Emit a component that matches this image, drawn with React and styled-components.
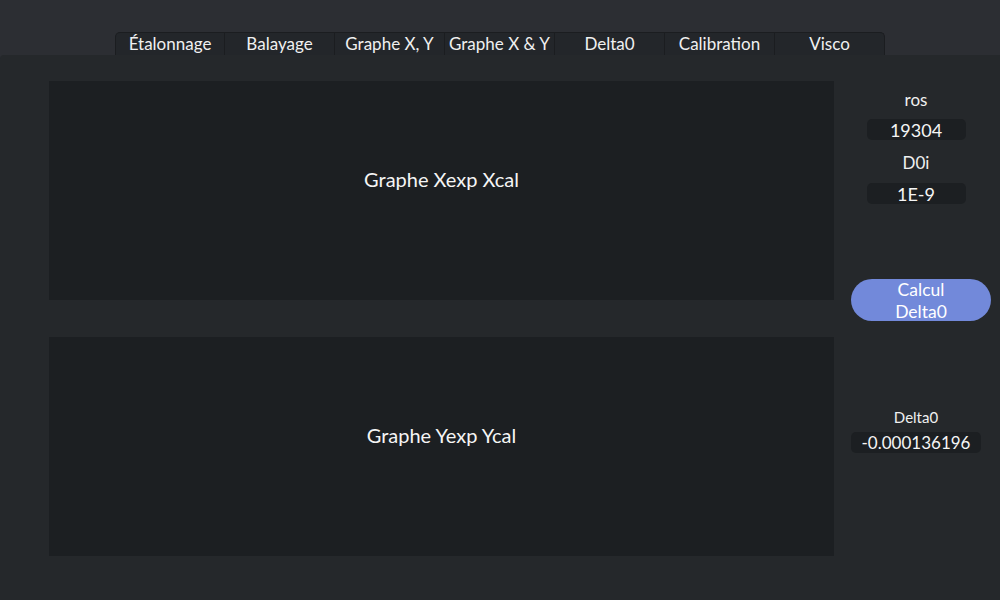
import React from 'react';
import styled, {createGlobalStyle} from 'styled-components';

const GlobalStyle = createGlobalStyle`
  html, body {
    margin: 0;
    padding: 0;
    background: #2c2e33;
    font-family: Lato, "Open Sans", sans-serif;
    color: #f2f2f2;
  }
`;

const Page = styled('div')`
  width: 1000px;
  height: 600px;
  display: flex;
  flex-direction: column;
  overflow: hidden;
`;

const TabBar = styled('div')`
  display: flex;
  padding-top: 32px;
  padding-left: 115px;
  height: 23px;
`;

const Tab = styled('div')`
  width: 110px;
  height: 23px;
  box-sizing: border-box;
  padding-bottom: 1px;
  background: #23262a;
  border: 1px solid #1b1d20;
  border-bottom: none;
  border-left: ${p => (p.first ? '1px solid #1b1d20' : 'none')};
  border-radius: ${p => (p.first ? '5px 0 0 0' : p.last ? '0 5px 0 0' : '0')};
  display: flex;
  align-items: center;
  justify-content: center;
  font-size: 17px;
  color: #f0f0f0;
  white-space: nowrap;
`;

const Panel = styled('div')`
  flex: 1;
  background: #25282b;
  border-radius: 4px 0 0 0;
  display: flex;
`;

const Graphs = styled('div')`
  display: flex;
  flex-direction: column;
  gap: 37px;
  padding: 26px 0 0 49px;
`;

const Graph = styled('div')`
  width: 785px;
  height: 219px;
  box-sizing: border-box;
  padding-bottom: 24px;
  background: #1c1f22;
  display: flex;
  align-items: center;
  justify-content: center;
  font-size: 20px;
  color: #f5f5f5;
`;

const Side = styled('div')`
  width: 130px;
  margin-left: 17px;
  padding-top: 35px;
  display: flex;
  flex-direction: column;
  align-items: center;
`;

const Label = styled('div')`
  font-size: ${p => (p.small ? '15px' : '17px')};
  line-height: ${p => (p.small ? '18px' : '20px')};
  margin-top: ${p => p.top || 0}px;
  color: #f0f0f0;
`;

const Field = styled('div')`
  width: ${p => p.w || 99}px;
  height: 21px;
  margin-top: ${p => p.top || 0}px;
  background: #1c1f22;
  border-radius: 5px;
  display: flex;
  align-items: center;
  justify-content: center;
  font-size: ${p => p.size || 18}px;
  color: #f5f5f5;
`;

const Button = styled('div')`
  align-self: flex-start;
  width: 140px;
  height: 42px;
  margin-top: 75px;
  background: #7289da;
  border-radius: 21px;
  box-sizing: border-box;
  text-align: center;
  font-size: 17.5px;
  line-height: 22px;
  color: #fff;
  overflow: hidden;
`;

const tabs = ['Étalonnage', 'Balayage', 'Graphe X, Y', 'Graphe X & Y', 'Delta0', 'Calibration', 'Visco'];

export default function App() {
  return (
    <Page>
      <GlobalStyle/>
      <TabBar>
        {tabs.map((t, i) => (
          <Tab key={t} first={i === 0} last={i === tabs.length - 1}>{t}</Tab>
        ))}
      </TabBar>
      <Panel>
        <Graphs>
          <Graph>Graphe Xexp Xcal</Graph>
          <Graph>Graphe Yexp Ycal</Graph>
        </Graphs>
        <Side>
          <Label>ros</Label>
          <Field top={9}>19304</Field>
          <Label top={13}>D0i</Label>
          <Field top={10}>1E-9</Field>
          <Button>Calcul<br/>Delta0</Button>
          <Label small top={87}>Delta0</Label>
          <Field w={130} top={6} size={17}>-0.000136196</Field>
        </Side>
      </Panel>
    </Page>
  );
}
